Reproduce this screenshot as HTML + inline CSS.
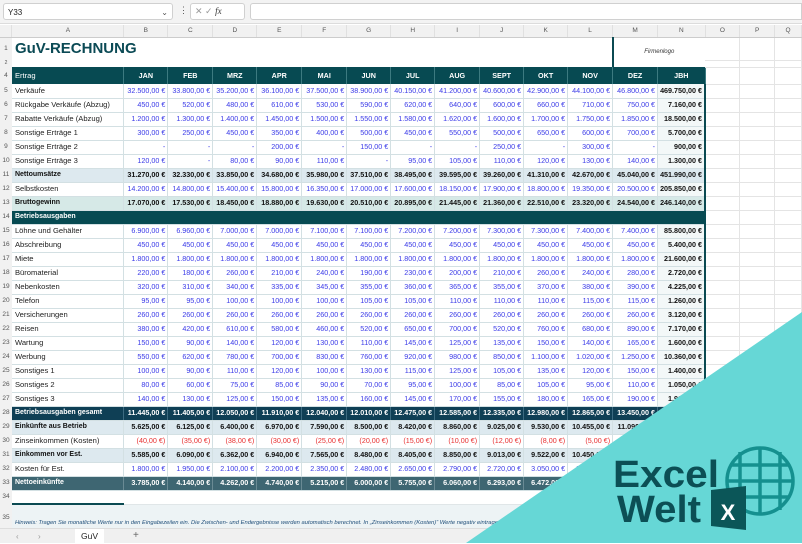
<!DOCTYPE html>
<html><head><meta charset="utf-8"><style>
*{margin:0;padding:0;box-sizing:border-box}
body{width:802px;height:543px;overflow:hidden;background:#fff;font-family:"Liberation Sans",sans-serif;position:relative}
.fb{position:absolute;left:0;top:0;width:802px;height:24px;background:#f3f3f3;border-bottom:1px solid #dcdcdc}
.nb{position:absolute;left:3px;top:3px;width:170px;height:17px;background:#fff;border:1px solid #d0d0d0;border-radius:3px;font-size:8px;padding:4px 4px;color:#222}
.fx{position:absolute;left:190px;top:3px;width:55px;height:17px;background:#fff;border:1px solid #d0d0d0;border-radius:3px;font-size:9px;color:#999;padding:2px 4px}
.fi{position:absolute;left:250px;top:3px;width:552px;height:17px;background:#fff;border:1px solid #d0d0d0;border-radius:3px 0 0 3px}
table{position:absolute;left:0;top:25px;border-collapse:collapse;table-layout:fixed}
td{height:14px;line-height:10px;font-size:7.2px;padding:0 2px;white-space:nowrap;overflow:hidden;border-right:1px solid #d3e0e3;border-bottom:1px solid #d3e0e3;text-align:right;color:#3b3be8}
td.r{background:#f1f1f1;color:#555;text-align:center;font-size:6.5px;border:none;padding:0}
td.l{text-align:left;color:#222;font-size:7.6px;padding-left:3px}
td.n{color:#111;font-weight:bold;background:#f3f8f8;border-right:2px solid #0b4a52}
tr.ch td{height:12px;background:#f1f1f1;color:#555;text-align:center;font-size:6.5px;border-right:1px solid #e0e0e0;border-bottom:1px solid #ccc}
tr.hd td{height:17px;background:#074a52;color:#fff;font-weight:bold;text-align:center;border-right:1px solid #3c7a80;border-bottom:none}
tr.hd td.l{text-align:left;font-weight:normal}
tr.s1 td{background:#dde9ef;color:#111;font-weight:bold}
tr.s2 td{background:#d6e9e7;color:#111;font-weight:bold}
tr.dk td{background:#074a52;color:#fff;font-weight:bold;border-right-color:#074a52}
tr.nv td{background:#0f3f55;color:#fff;font-weight:bold;border-right-color:#3c6a80}
tr.ln td{background:#3e6672;color:#fff;font-weight:bold;border-right-color:#6a8a94}
tr.rd td{color:#e83030}
tr.rd td.l{color:#222}
tr.s1 td.l,tr.s2 td.l,tr.dk td.l,tr.nv td.l,tr.ln td.l{font-size:7px}
tr.s1 td.r,tr.s2 td.r,tr.dk td.r,tr.nv td.r,tr.ln td.r,tr.rd td.r,tr.hd td.r{background:#f1f1f1;color:#555;font-weight:normal;border:none}
tr td.w{border-right:1px solid #e4e4e4 !important;border-bottom:1px solid #e4e4e4 !important;background:#fff !important}
tr.z td{height:7px;font-size:0;line-height:0}
</style></head><body>
<div class="fb"><div class="nb">Y33<span style="float:right;color:#555">⌄</span></div><span style="position:absolute;left:179px;top:5px;font-size:9px;color:#555">⋮</span><div class="fx">✕ ✓ <i style="color:#333;font-family:'Liberation Serif',serif">fx</i></div><div class="fi"></div></div>
<table>
<colgroup><col style="width:12px"><col style="width:112px"><col style="width:44px"><col style="width:45px"><col style="width:44px"><col style="width:45px"><col style="width:45px"><col style="width:44px"><col style="width:44px"><col style="width:45px"><col style="width:44px"><col style="width:44px"><col style="width:45px"><col style="width:45px"><col style="width:47px"><col style="width:35px"><col style="width:35px"><col style="width:27px"></colgroup>
<tr class="ch"><td></td><td>A</td><td>B</td><td>C</td><td>D</td><td>E</td><td>F</td><td>G</td><td>H</td><td>I</td><td>J</td><td>K</td><td>L</td><td>M</td><td>N</td><td>O</td><td>P</td><td>Q</td></tr>
<tr><td class="r" style="height:23px">1</td><td colspan="12" class="l" style="border:none;font-size:15px;line-height:18px;font-weight:bold;color:#0b4a55;background:#fff">GuV-RECHNUNG</td><td colspan="2" style="border:none;border-left:2px solid #0b4a52;text-align:center;color:#333;font-style:italic;font-size:6px;background:#fff" rowspan="2">Firmenlogo</td><td class="w"></td><td class="w"></td><td class="w"></td></tr>
<tr class="z"><td class="r" style="font-size:5px;line-height:7px">2</td><td colspan="12" style="border:none;background:#fff"></td><td class="w"></td><td class="w"></td><td class="w"></td></tr>
<tr class="hd"><td class="r">4</td><td class="l">Ertrag</td><td>JAN</td><td>FEB</td><td>MRZ</td><td>APR</td><td>MAI</td><td>JUN</td><td>JUL</td><td>AUG</td><td>SEPT</td><td>OKT</td><td>NOV</td><td>DEZ</td><td>JBH</td><td class="w"></td><td class="w"></td><td class="w"></td></tr>
<tr><td class="r">5</td><td class="l">Verkäufe</td><td>32.500,00 €</td><td>33.800,00 €</td><td>35.200,00 €</td><td>36.100,00 €</td><td>37.500,00 €</td><td>38.900,00 €</td><td>40.150,00 €</td><td>41.200,00 €</td><td>40.600,00 €</td><td>42.900,00 €</td><td>44.100,00 €</td><td>46.800,00 €</td><td class="n">469.750,00 €</td><td class="w"></td><td class="w"></td><td class="w"></td></tr>
<tr><td class="r">6</td><td class="l">Rückgabe Verkäufe (Abzug)</td><td>450,00 €</td><td>520,00 €</td><td>480,00 €</td><td>610,00 €</td><td>530,00 €</td><td>590,00 €</td><td>620,00 €</td><td>640,00 €</td><td>600,00 €</td><td>660,00 €</td><td>710,00 €</td><td>750,00 €</td><td class="n">7.160,00 €</td><td class="w"></td><td class="w"></td><td class="w"></td></tr>
<tr><td class="r">7</td><td class="l">Rabatte Verkäufe (Abzug)</td><td>1.200,00 €</td><td>1.300,00 €</td><td>1.400,00 €</td><td>1.450,00 €</td><td>1.500,00 €</td><td>1.550,00 €</td><td>1.580,00 €</td><td>1.620,00 €</td><td>1.600,00 €</td><td>1.700,00 €</td><td>1.750,00 €</td><td>1.850,00 €</td><td class="n">18.500,00 €</td><td class="w"></td><td class="w"></td><td class="w"></td></tr>
<tr><td class="r">8</td><td class="l">Sonstige Erträge 1</td><td>300,00 €</td><td>250,00 €</td><td>450,00 €</td><td>350,00 €</td><td>400,00 €</td><td>500,00 €</td><td>450,00 €</td><td>550,00 €</td><td>500,00 €</td><td>650,00 €</td><td>600,00 €</td><td>700,00 €</td><td class="n">5.700,00 €</td><td class="w"></td><td class="w"></td><td class="w"></td></tr>
<tr><td class="r">9</td><td class="l">Sonstige Erträge 2</td><td>-</td><td>-</td><td>-</td><td>200,00 €</td><td>-</td><td>150,00 €</td><td>-</td><td>-</td><td>250,00 €</td><td>-</td><td>300,00 €</td><td>-</td><td class="n">900,00 €</td><td class="w"></td><td class="w"></td><td class="w"></td></tr>
<tr><td class="r">10</td><td class="l">Sonstige Erträge 3</td><td>120,00 €</td><td>-</td><td>80,00 €</td><td>90,00 €</td><td>110,00 €</td><td>-</td><td>95,00 €</td><td>105,00 €</td><td>110,00 €</td><td>120,00 €</td><td>130,00 €</td><td>140,00 €</td><td class="n">1.300,00 €</td><td class="w"></td><td class="w"></td><td class="w"></td></tr>
<tr class="s1"><td class="r">11</td><td class="l">Nettoumsätze</td><td>31.270,00 €</td><td>32.330,00 €</td><td>33.850,00 €</td><td>34.680,00 €</td><td>35.980,00 €</td><td>37.510,00 €</td><td>38.495,00 €</td><td>39.595,00 €</td><td>39.260,00 €</td><td>41.310,00 €</td><td>42.670,00 €</td><td>45.040,00 €</td><td class="n" style="background:#dde9ef">451.990,00 €</td><td class="w"></td><td class="w"></td><td class="w"></td></tr>
<tr><td class="r">12</td><td class="l">Selbstkosten</td><td>14.200,00 €</td><td>14.800,00 €</td><td>15.400,00 €</td><td>15.800,00 €</td><td>16.350,00 €</td><td>17.000,00 €</td><td>17.600,00 €</td><td>18.150,00 €</td><td>17.900,00 €</td><td>18.800,00 €</td><td>19.350,00 €</td><td>20.500,00 €</td><td class="n">205.850,00 €</td><td class="w"></td><td class="w"></td><td class="w"></td></tr>
<tr class="s2"><td class="r">13</td><td class="l">Bruttogewinn</td><td>17.070,00 €</td><td>17.530,00 €</td><td>18.450,00 €</td><td>18.880,00 €</td><td>19.630,00 €</td><td>20.510,00 €</td><td>20.895,00 €</td><td>21.445,00 €</td><td>21.360,00 €</td><td>22.510,00 €</td><td>23.320,00 €</td><td>24.540,00 €</td><td class="n" style="background:#d6e9e7">246.140,00 €</td><td class="w"></td><td class="w"></td><td class="w"></td></tr>
<tr class="dk"><td class="r">14</td><td class="l" colspan="14">Betriebsausgaben</td><td class="w"></td><td class="w"></td><td class="w"></td></tr>
<tr><td class="r">15</td><td class="l">Löhne und Gehälter</td><td>6.900,00 €</td><td>6.960,00 €</td><td>7.000,00 €</td><td>7.000,00 €</td><td>7.100,00 €</td><td>7.100,00 €</td><td>7.200,00 €</td><td>7.200,00 €</td><td>7.300,00 €</td><td>7.300,00 €</td><td>7.400,00 €</td><td>7.400,00 €</td><td class="n">85.800,00 €</td><td class="w"></td><td class="w"></td><td class="w"></td></tr>
<tr><td class="r">16</td><td class="l">Abschreibung</td><td>450,00 €</td><td>450,00 €</td><td>450,00 €</td><td>450,00 €</td><td>450,00 €</td><td>450,00 €</td><td>450,00 €</td><td>450,00 €</td><td>450,00 €</td><td>450,00 €</td><td>450,00 €</td><td>450,00 €</td><td class="n">5.400,00 €</td><td class="w"></td><td class="w"></td><td class="w"></td></tr>
<tr><td class="r">17</td><td class="l">Miete</td><td>1.800,00 €</td><td>1.800,00 €</td><td>1.800,00 €</td><td>1.800,00 €</td><td>1.800,00 €</td><td>1.800,00 €</td><td>1.800,00 €</td><td>1.800,00 €</td><td>1.800,00 €</td><td>1.800,00 €</td><td>1.800,00 €</td><td>1.800,00 €</td><td class="n">21.600,00 €</td><td class="w"></td><td class="w"></td><td class="w"></td></tr>
<tr><td class="r">18</td><td class="l">Büromaterial</td><td>220,00 €</td><td>180,00 €</td><td>260,00 €</td><td>210,00 €</td><td>240,00 €</td><td>190,00 €</td><td>230,00 €</td><td>200,00 €</td><td>210,00 €</td><td>260,00 €</td><td>240,00 €</td><td>280,00 €</td><td class="n">2.720,00 €</td><td class="w"></td><td class="w"></td><td class="w"></td></tr>
<tr><td class="r">19</td><td class="l">Nebenkosten</td><td>320,00 €</td><td>310,00 €</td><td>340,00 €</td><td>335,00 €</td><td>345,00 €</td><td>355,00 €</td><td>360,00 €</td><td>365,00 €</td><td>355,00 €</td><td>370,00 €</td><td>380,00 €</td><td>390,00 €</td><td class="n">4.225,00 €</td><td class="w"></td><td class="w"></td><td class="w"></td></tr>
<tr><td class="r">20</td><td class="l">Telefon</td><td>95,00 €</td><td>95,00 €</td><td>100,00 €</td><td>100,00 €</td><td>100,00 €</td><td>105,00 €</td><td>105,00 €</td><td>110,00 €</td><td>110,00 €</td><td>110,00 €</td><td>115,00 €</td><td>115,00 €</td><td class="n">1.260,00 €</td><td class="w"></td><td class="w"></td><td class="w"></td></tr>
<tr><td class="r">21</td><td class="l">Versicherungen</td><td>260,00 €</td><td>260,00 €</td><td>260,00 €</td><td>260,00 €</td><td>260,00 €</td><td>260,00 €</td><td>260,00 €</td><td>260,00 €</td><td>260,00 €</td><td>260,00 €</td><td>260,00 €</td><td>260,00 €</td><td class="n">3.120,00 €</td><td class="w"></td><td class="w"></td><td class="w"></td></tr>
<tr><td class="r">22</td><td class="l">Reisen</td><td>380,00 €</td><td>420,00 €</td><td>610,00 €</td><td>580,00 €</td><td>460,00 €</td><td>520,00 €</td><td>650,00 €</td><td>700,00 €</td><td>520,00 €</td><td>760,00 €</td><td>680,00 €</td><td>890,00 €</td><td class="n">7.170,00 €</td><td class="w"></td><td class="w"></td><td class="w"></td></tr>
<tr><td class="r">23</td><td class="l">Wartung</td><td>150,00 €</td><td>90,00 €</td><td>140,00 €</td><td>120,00 €</td><td>130,00 €</td><td>110,00 €</td><td>145,00 €</td><td>125,00 €</td><td>135,00 €</td><td>150,00 €</td><td>140,00 €</td><td>165,00 €</td><td class="n">1.600,00 €</td><td class="w"></td><td class="w"></td><td class="w"></td></tr>
<tr><td class="r">24</td><td class="l">Werbung</td><td>550,00 €</td><td>620,00 €</td><td>780,00 €</td><td>700,00 €</td><td>830,00 €</td><td>760,00 €</td><td>920,00 €</td><td>980,00 €</td><td>850,00 €</td><td>1.100,00 €</td><td>1.020,00 €</td><td>1.250,00 €</td><td class="n">10.360,00 €</td><td class="w"></td><td class="w"></td><td class="w"></td></tr>
<tr><td class="r">25</td><td class="l">Sonstiges 1</td><td>100,00 €</td><td>90,00 €</td><td>110,00 €</td><td>120,00 €</td><td>100,00 €</td><td>130,00 €</td><td>115,00 €</td><td>125,00 €</td><td>105,00 €</td><td>135,00 €</td><td>120,00 €</td><td>150,00 €</td><td class="n">1.400,00 €</td><td class="w"></td><td class="w"></td><td class="w"></td></tr>
<tr><td class="r">26</td><td class="l">Sonstiges 2</td><td>80,00 €</td><td>60,00 €</td><td>75,00 €</td><td>85,00 €</td><td>90,00 €</td><td>70,00 €</td><td>95,00 €</td><td>100,00 €</td><td>85,00 €</td><td>105,00 €</td><td>95,00 €</td><td>110,00 €</td><td class="n">1.050,00 €</td><td class="w"></td><td class="w"></td><td class="w"></td></tr>
<tr><td class="r">27</td><td class="l">Sonstiges 3</td><td>140,00 €</td><td>130,00 €</td><td>125,00 €</td><td>150,00 €</td><td>135,00 €</td><td>160,00 €</td><td>145,00 €</td><td>170,00 €</td><td>155,00 €</td><td>180,00 €</td><td>165,00 €</td><td>190,00 €</td><td class="n">1.915,00 €</td><td class="w"></td><td class="w"></td><td class="w"></td></tr>
<tr class="nv"><td class="r">28</td><td class="l">Betriebsausgaben gesamt</td><td>11.445,00 €</td><td>11.405,00 €</td><td>12.050,00 €</td><td>11.910,00 €</td><td>12.040,00 €</td><td>12.010,00 €</td><td>12.475,00 €</td><td>12.585,00 €</td><td>12.335,00 €</td><td>12.980,00 €</td><td>12.865,00 €</td><td>13.450,00 €</td><td>150.530,00 €</td><td class="w"></td><td class="w"></td><td class="w"></td></tr>
<tr class="s1"><td class="r">29</td><td class="l">Einkünfte aus Betrieb</td><td>5.625,00 €</td><td>6.125,00 €</td><td>6.400,00 €</td><td>6.970,00 €</td><td>7.590,00 €</td><td>8.500,00 €</td><td>8.420,00 €</td><td>8.860,00 €</td><td>9.025,00 €</td><td>9.530,00 €</td><td>10.455,00 €</td><td>11.090,00 €</td><td>95.610,00 €</td><td class="w"></td><td class="w"></td><td class="w"></td></tr>
<tr class="rd"><td class="r">30</td><td class="l">Zinseinkommen (Kosten)</td><td>(40,00 €)</td><td>(35,00 €)</td><td>(38,00 €)</td><td>(30,00 €)</td><td>(25,00 €)</td><td>(20,00 €)</td><td>(15,00 €)</td><td>(10,00 €)</td><td>(12,00 €)</td><td>(8,00 €)</td><td>(5,00 €)</td><td>(5,00 €)</td><td>(243,00 €)</td><td class="w"></td><td class="w"></td><td class="w"></td></tr>
<tr class="s1"><td class="r">31</td><td class="l">Einkommen vor Est.</td><td>5.585,00 €</td><td>6.090,00 €</td><td>6.362,00 €</td><td>6.940,00 €</td><td>7.565,00 €</td><td>8.480,00 €</td><td>8.405,00 €</td><td>8.850,00 €</td><td>9.013,00 €</td><td>9.522,00 €</td><td>10.450,00 €</td><td>11.085,00 €</td><td>95.367,00 €</td><td class="w"></td><td class="w"></td><td class="w"></td></tr>
<tr><td class="r">32</td><td class="l">Kosten für Est.</td><td>1.800,00 €</td><td>1.950,00 €</td><td>2.100,00 €</td><td>2.200,00 €</td><td>2.350,00 €</td><td>2.480,00 €</td><td>2.650,00 €</td><td>2.790,00 €</td><td>2.720,00 €</td><td>3.050,00 €</td><td>3.200,00 €</td><td>3.400,00 €</td><td class="n">30.690,00 €</td><td class="w"></td><td class="w"></td><td class="w"></td></tr>
<tr class="ln"><td class="r">33</td><td class="l">Nettoeinkünfte</td><td>3.785,00 €</td><td>4.140,00 €</td><td>4.262,00 €</td><td>4.740,00 €</td><td>5.215,00 €</td><td>6.000,00 €</td><td>5.755,00 €</td><td>6.060,00 €</td><td>6.293,00 €</td><td>6.472,00 €</td><td>7.250,00 €</td><td>7.685,00 €</td><td>64.677,00 €</td><td class="w"></td><td class="w"></td><td class="w"></td></tr>
<tr><td class="r" style="height:10px">34</td><td style="border:none;border-bottom:2px solid #0b4a52;height:10px"></td><td colspan="16" style="border:none;border-bottom:1px solid #e0e6e8"></td></tr>
<tr><td class="r" style="height:28px">35</td><td colspan="17" style="background:#edf3f5;border:none;text-align:left;color:#1f4e79;font-style:italic;font-size:5.8px;padding:13px 0 0 3px;vertical-align:top">Hinweis: Tragen Sie monatliche Werte nur in den Eingabezeilen ein. Die Zwischen- und Endergebnisse werden automatisch berechnet. In „Zinseinkommen (Kosten)“ Werte negativ eintragen.</td></tr>
</table>
<div style="position:absolute;left:0;top:528px;width:802px;height:15px;background:#f0f0f0;border-top:1px solid #ddd;font-size:8px;color:#999">
<span style="position:absolute;left:16px;top:3px">‹</span><span style="position:absolute;left:38px;top:3px">›</span>
<div style="position:absolute;left:75px;top:0;width:29px;height:15px;background:#fff;color:#222;font-size:8.5px;text-align:center;padding-top:2px">GuV</div>
<span style="position:absolute;left:133px;top:1px;font-size:10px;color:#666">+</span></div>
<svg style="position:absolute;left:0;top:0" width="802" height="543">
<polygon points="802,312 802,543 466,543" fill="#66d7d6"/>
<text x="613" y="487" font-family="Liberation Sans,sans-serif" font-weight="bold" font-size="38" fill="#0c4f55" textLength="106" lengthAdjust="spacingAndGlyphs">Excel</text>
<text x="617" y="522" font-family="Liberation Sans,sans-serif" font-weight="bold" font-size="38" fill="#0c4f55" textLength="84" lengthAdjust="spacingAndGlyphs">Welt</text>
<g fill="none" stroke="#15908f" stroke-width="3.5">
<circle cx="760" cy="481" r="33"/>
<line x1="740" y1="452" x2="740" y2="510"/><line x1="760" y1="448" x2="760" y2="514"/><line x1="780" y1="452" x2="780" y2="510"/>
<line x1="730" y1="465" x2="790" y2="465"/><line x1="727" y1="481" x2="793" y2="481"/><line x1="730" y1="497" x2="790" y2="497"/>
</g>
<polygon points="711,490 746,486 746,530 711,526" fill="#0b5658"/>
<text x="728" y="520" text-anchor="middle" font-family="Liberation Sans,sans-serif" font-weight="bold" font-size="22" fill="#fff">X</text>
</svg>
</body></html>
